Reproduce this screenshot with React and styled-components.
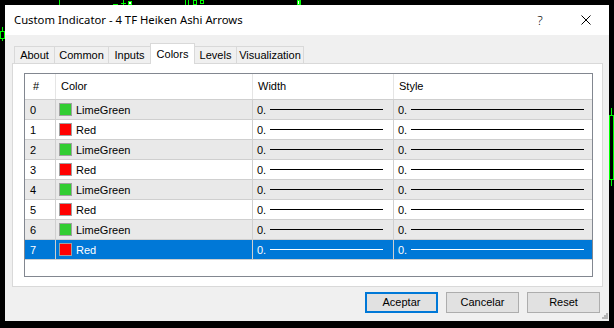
import React from 'react';
import styled, { createGlobalStyle } from 'styled-components';

const Global = createGlobalStyle`
  html, body { margin: 0; padding: 0; background: #000; }
  body { width: 614px; height: 328px; overflow: hidden; }
  * { box-sizing: border-box; }
`;

const Screen = styled.div`
  position: relative;
  width: 614px;
  height: 328px;
  background: #000;
  padding: 5px 5px 7px 5px;
  font-family: "Liberation Sans", Arial, sans-serif;
  font-size: 11px;
  color: #000;
`;

const Chart = styled.svg`
  position: absolute;
  left: 0;
  top: 0;
  width: 614px;
  height: 328px;
`;

const Window = styled.div`
  position: relative;
  width: 604px;
  height: 316px;
  background: #f0f0f0;
  display: flex;
  flex-direction: column;
`;

const TitleBar = styled.div`
  height: 30px;
  flex: none;
  background: #fff;
  display: flex;
  align-items: center;
  padding-left: 9px;
`;

const Title = styled.div`
  flex: 1;
  font-family: "Noto Sans", "Open Sans", sans-serif;
  font-size: 11.3px;
  color: #000;
  padding-bottom: 1px;
`;

const CaptionButton = styled.div`
  width: 46px;
  height: 30px;
  display: flex;
  align-items: center;
  justify-content: center;
  font-family: "Noto Sans", sans-serif;
  font-size: 13px;
  font-weight: 300;
  color: #000;
`;

const Body = styled.div`
  flex: 1;
  display: flex;
  flex-direction: column;
  padding: 8px 6px 0 7px;
`;

const TabStrip = styled.div`
  display: flex;
  align-items: flex-end;
  height: 20px;
  padding-left: 2px;
  position: relative;
  z-index: 1;
`;

const Tab = styled.div`
  width: ${p => p.$w}px;
  height: ${p => (p.$active ? 21 : 17)}px;
  margin-left: ${p => (p.$first ? 0 : -1)}px;
  margin-bottom: ${p => (p.$active ? -1 : 0)}px;
  border: 1px solid #d9d9d9;
  border-bottom: ${p => (p.$active ? 'none' : '0')};
  background: ${p => (p.$active ? '#fff' : '#f0f0f0')};
  position: relative;
  z-index: ${p => (p.$active ? 2 : 1)};
  display: flex;
  align-items: center;
  justify-content: center;
  padding-bottom: ${p => (p.$active ? 1 : 0)}px;
  white-space: nowrap;
`;

const Panel = styled.div`
  height: 224px;
  flex: none;
  border: 1px solid #d9d9d9;
  background: #fff;
  padding: 9px 9px 9px 11px;
`;

const List = styled.div`
  width: 569px;
  height: 204px;
  border: 1px solid #828790;
  background: #fff;
  overflow: hidden;
`;

const cols = '31px 197px 141px 198px';

const HeaderRow = styled.div`
  display: grid;
  grid-template-columns: ${cols};
  height: 26px;
  border-bottom: 1px solid #cfcfcf;
`;

const HeaderCell = styled.div`
  display: flex;
  align-items: center;
  padding-left: ${p => p.$pad}px;
  border-right: ${p => (p.$last ? 'none' : '1px solid #e5e5e5')};
  padding-bottom: 1px;
`;

const Row = styled.div`
  display: grid;
  grid-template-columns: ${cols};
  height: 20px;
  border-bottom: 1px solid #cfcfcf;
  background: ${p => (p.$selected ? '#0078d7' : p.$shade ? '#e9e9e9' : '#fff')};
  color: ${p => (p.$selected ? '#fff' : '#000')};
`;

const Cell = styled.div`
  display: flex;
  align-items: center;
  padding-left: ${p => p.$pad}px;
  border-right: ${p => (p.$last ? 'none' : '1px solid #cfcfcf')};
  white-space: nowrap;
`;

const Swatch = styled.span`
  width: 13px;
  height: 13px;
  flex: none;
  border: 1px solid #a0a0a0;
  background: ${p => p.$color};
  margin-right: 4px;
`;

const LineSample = styled.span`
  flex: 1;
  height: 1px;
  background: currentColor;
  margin-left: 4px;
  margin-right: ${p => p.$right}px;
`;

const Buttons = styled.div`
  display: flex;
  justify-content: flex-end;
  gap: 8px;
  margin-top: 5px;
  margin-right: 3px;
`;

const Button = styled.div`
  width: 73px;
  height: 21px;
  background: #e1e1e1;
  border: ${p => (p.$default ? '2px solid #0078d7' : '1px solid #adadad')};
  display: flex;
  align-items: center;
  justify-content: center;
  padding-bottom: 1px;
`;

const Grip = styled.svg`
  position: absolute;
  right: 1px;
  bottom: 2px;
  width: 7px;
  height: 7px;
`;

const tabs = [
  { label: 'About', w: 41 },
  { label: 'Common', w: 55 },
  { label: 'Inputs', w: 43 },
  { label: 'Colors', w: 45, active: true },
  { label: 'Levels', w: 43 },
  { label: 'Visualization', w: 68 },
];

const rows = Array.from({ length: 8 }, (_, i) => ({
  idx: i,
  name: i % 2 === 0 ? 'LimeGreen' : 'Red',
  color: i % 2 === 0 ? '#32cd32' : '#ff0000',
}));

export default function App() {
  return (
    <>
      <Global />
      <Screen>
        <Chart viewBox="0 0 614 328">
          <g stroke="#00ff00" fill="none" strokeWidth="1">
            <line x1="2.5" y1="27" x2="2.5" y2="41" />
            <rect x="0.5" y="31.5" width="4" height="7" fill="#000" />
            <line x1="59.5" y1="0" x2="59.5" y2="5" />
            <line x1="113" y1="4.5" x2="118" y2="4.5" />
            <line x1="123.5" y1="0" x2="123.5" y2="5" />
            <line x1="121" y1="3.5" x2="126" y2="3.5" />
            <rect x="128.5" y="1.5" width="3" height="3" fill="#fff" />
            <line x1="185.5" y1="0" x2="185.5" y2="5" />
            <line x1="188.5" y1="0" x2="188.5" y2="5" />
            <rect x="193.5" y="0.5" width="3" height="4" />
            <rect x="200.5" y="0.5" width="3" height="3" />
            <rect x="297.5" y="0" width="2" height="5" fill="#fff" />
            <line x1="300.5" y1="0" x2="300.5" y2="5" />
            <line x1="611.5" y1="108" x2="611.5" y2="186" />
            <rect x="609.5" y="115.5" width="4" height="64" fill="#000" />
          </g>
        </Chart>
        <Window>
          <TitleBar>
            <Title>Custom Indicator - 4 TF Heiken Ashi Arrows</Title>
            <CaptionButton>?</CaptionButton>
            <CaptionButton>
              <svg width="10" height="10" viewBox="0 0 10 10">
                <path d="M0.5 0.5 L9.5 9.5 M9.5 0.5 L0.5 9.5" stroke="#000" strokeWidth="1" fill="none" />
              </svg>
            </CaptionButton>
          </TitleBar>
          <Body>
            <TabStrip>
              {tabs.map((t, i) => (
                <Tab key={t.label} $w={t.w} $active={t.active} $first={i === 0}>
                  {t.label}
                </Tab>
              ))}
            </TabStrip>
            <Panel>
              <List>
                <HeaderRow>
                  <HeaderCell $pad={8}>#</HeaderCell>
                  <HeaderCell $pad={5}>Color</HeaderCell>
                  <HeaderCell $pad={5}>Width</HeaderCell>
                  <HeaderCell $pad={5} $last>Style</HeaderCell>
                </HeaderRow>
                {rows.map(r => (
                  <Row key={r.idx} $shade={r.idx % 2 === 0} $selected={r.idx === 7}>
                    <Cell $pad={5}>{r.idx}</Cell>
                    <Cell $pad={3}>
                      <Swatch $color={r.color} />
                      {r.name}
                    </Cell>
                    <Cell $pad={4}>
                      0.
                      <LineSample $right={10} />
                    </Cell>
                    <Cell $pad={4} $last>
                      0.
                      <LineSample $right={8} />
                    </Cell>
                  </Row>
                ))}
              </List>
            </Panel>
            <Buttons>
              <Button $default>Aceptar</Button>
              <Button>Cancelar</Button>
              <Button>Reset</Button>
            </Buttons>
          </Body>
          <Grip viewBox="0 0 7 7">
            <g fill="#b5b5b5">
              <rect x="5" y="1" width="2" height="2" />
              <rect x="3" y="3" width="2" height="2" />
              <rect x="5" y="3" width="2" height="2" />
              <rect x="1" y="5" width="2" height="2" />
              <rect x="3" y="5" width="2" height="2" />
              <rect x="5" y="5" width="2" height="2" />
            </g>
          </Grip>
        </Window>
      </Screen>
    </>
  );
}
